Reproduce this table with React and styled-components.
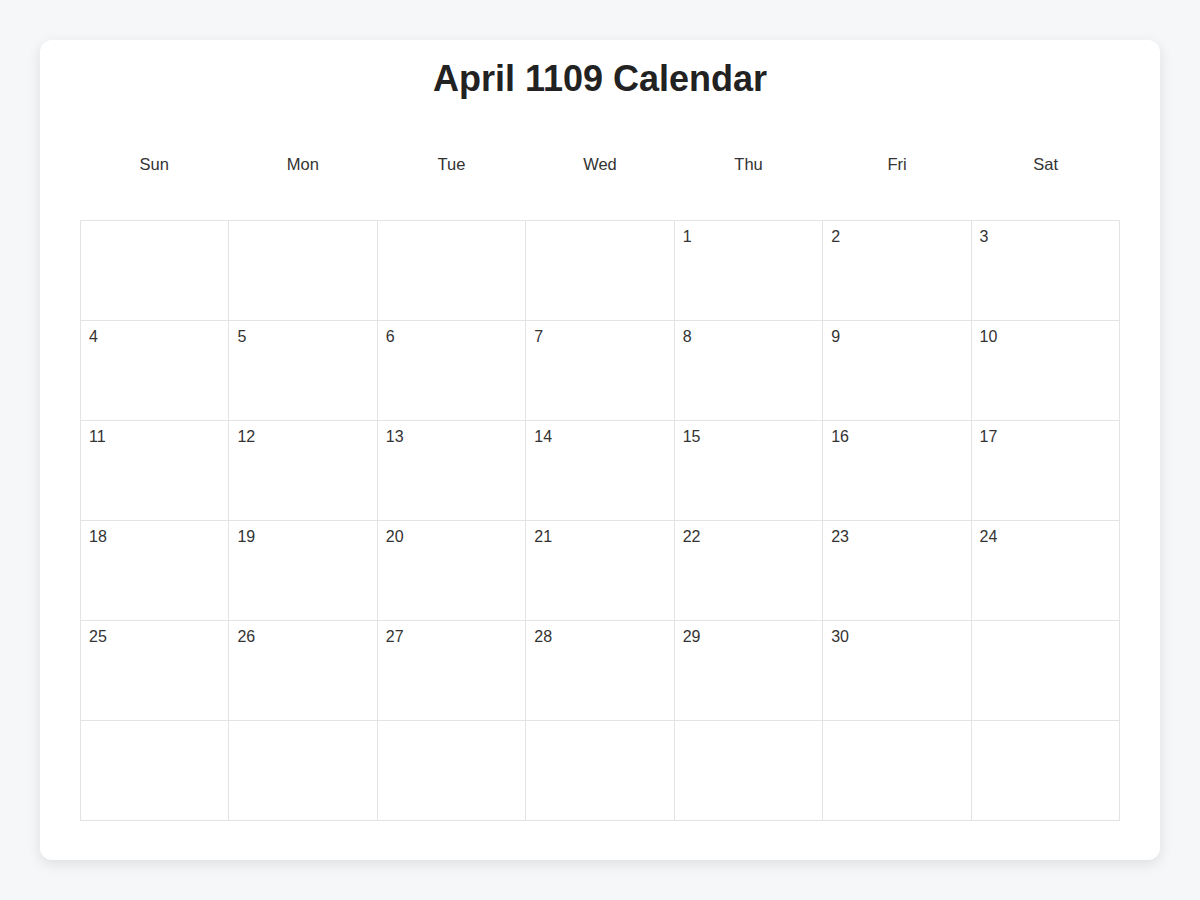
import React from "react";
import styled, { createGlobalStyle } from "styled-components";

const Global = createGlobalStyle`
  html, body { margin: 0; padding: 0; }
  body {
    background: #f6f7f9;
    font-family: "Liberation Sans", Arial, sans-serif;
    color: #333;
  }
`;

const Page = styled.div`
  padding: 40px;
  box-sizing: border-box;
  width: 1200px;
  height: 900px;
`;

const Card = styled.div`
  background: #fff;
  border-radius: 12px;
  box-shadow: 0 4px 14px rgba(0, 0, 0, 0.1);
  padding: 20px 40px 40px;
  box-sizing: border-box;
  height: 820px;
`;

const Title = styled.h1`
  margin: 0;
  text-align: center;
  font-size: 36px;
  line-height: 37px;
  font-weight: 700;
  color: #222;
`;

const WeekRow = styled.div`
  display: grid;
  grid-template-columns: repeat(7, 1fr);
  margin-top: 30px;
  height: 74px;
  margin-bottom: 19px;
`;

const WeekDay = styled.div`
  display: flex;
  align-items: center;
  justify-content: center;
  font-size: 16.5px;
  color: #333;
`;

const Grid = styled.div`
  display: grid;
  grid-template-columns: repeat(7, 1fr);
  grid-auto-rows: 100px;
  border-top: 1px solid #e3e3e3;
  border-left: 1px solid #e3e3e3;
`;

const Cell = styled.div`
  border-right: 1px solid #e3e3e3;
  border-bottom: 1px solid #e3e3e3;
  padding: 7px 8px;
  font-size: 16px;
  line-height: 18px;
  color: #333;
`;

const days = ["Sun", "Mon", "Tue", "Wed", "Thu", "Fri", "Sat"];

export default function App() {
  const cells = [];
  for (let i = 0; i < 42; i++) {
    const d = i - 3;
    cells.push(d >= 1 && d <= 30 ? d : "");
  }
  return (
    <Page>
      <Global />
      <Card>
        <Title>April 1109 Calendar</Title>
        <WeekRow>
          {days.map((d) => (
            <WeekDay key={d}>{d}</WeekDay>
          ))}
        </WeekRow>
        <Grid>
          {cells.map((c, i) => (
            <Cell key={i}>{c}</Cell>
          ))}
        </Grid>
      </Card>
    </Page>
  );
}
